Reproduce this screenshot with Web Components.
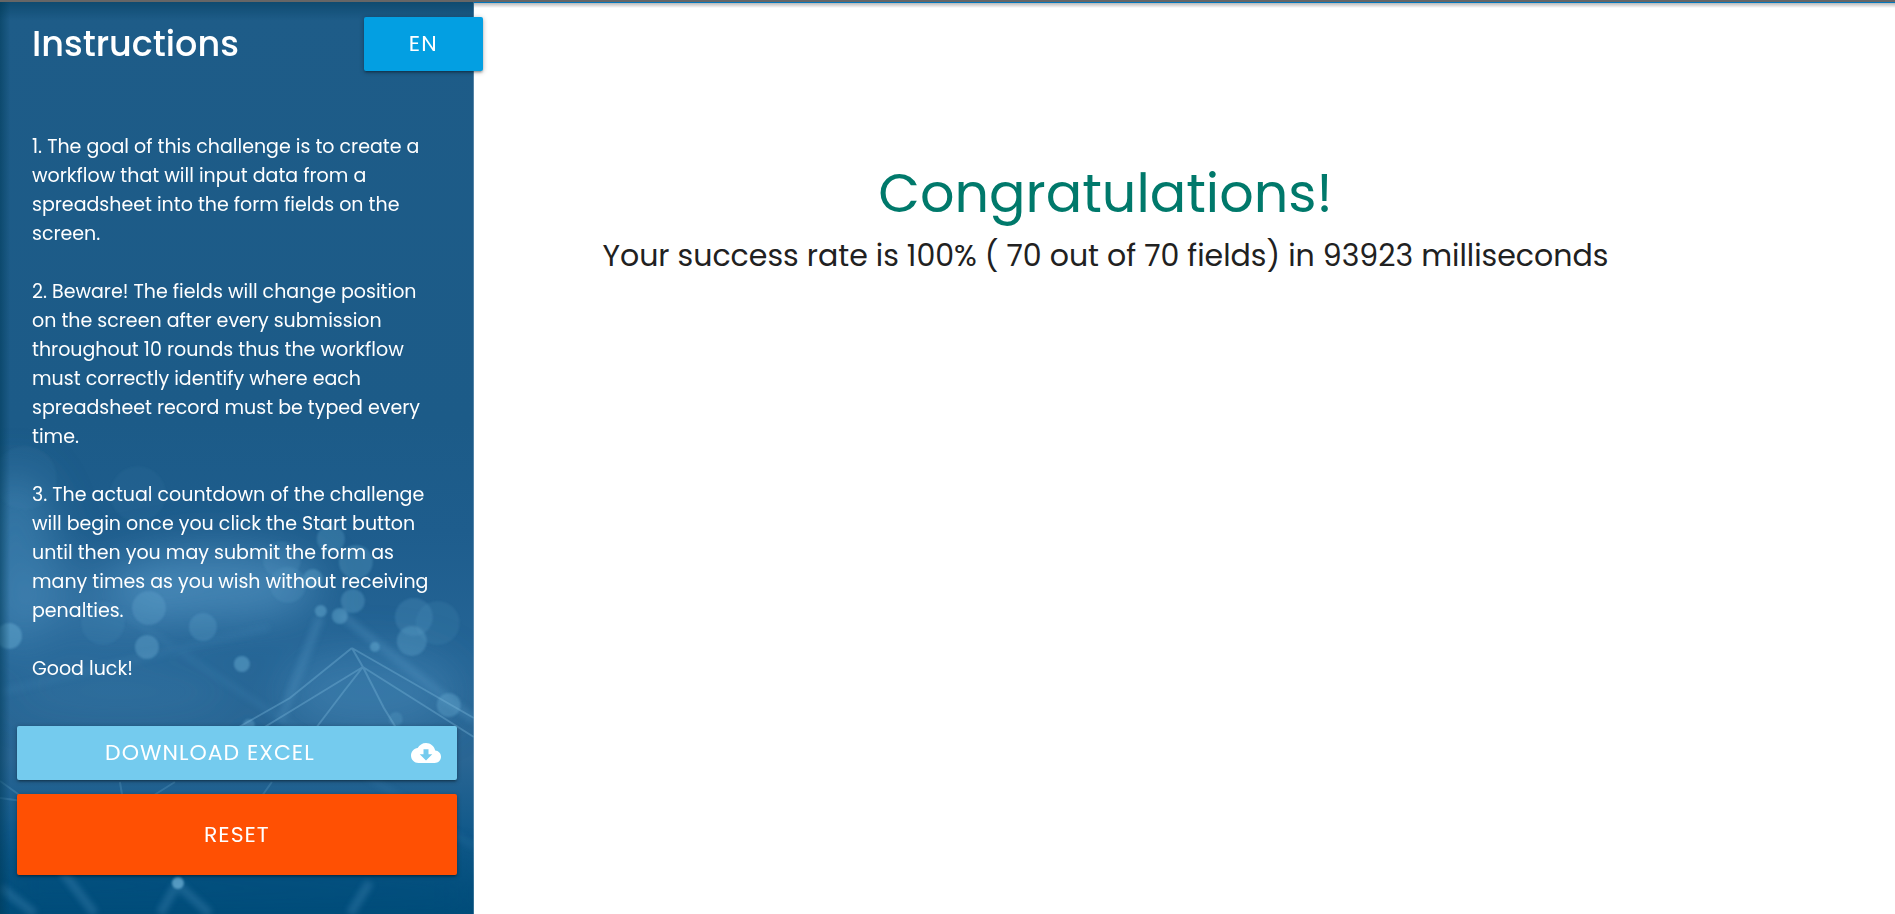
<!DOCTYPE html>
<html lang="en">
<head>
<meta charset="utf-8">
<meta name="viewport" content="width=device-width, initial-scale=1">
<title>Challenge</title>
<style>
html,body{margin:0;height:100%}
body{font-family:Poppins,Inter,"Open Sans",sans-serif;color:#212121;background:#fff}
</style>
</head>
<body>
<rpa-app></rpa-app>
<script>
const define = (name, html) => customElements.define(name, class extends HTMLElement {
  constructor() {
    super();
    const t = document.createElement('template');
    t.innerHTML = html;
    this.attachShadow({mode: 'open'}).append(t.content.cloneNode(true));
  }
});

const buttonBase = `
  :host{display:block}
  button,a{box-sizing:border-box;display:flex;align-items:center;justify-content:center;width:100%;
    border:0;border-radius:2px;color:#fff;font-family:inherit;font-size:22px;line-height:28px;font-weight:400;
    letter-spacing:1px;text-decoration:none;text-transform:uppercase;cursor:pointer;
    box-shadow:0 2px 2px rgba(0,0,0,.14),0 3px 1px -2px rgba(0,0,0,.12),0 1px 5px rgba(0,0,0,.3)}`;

define('lang-button', `<style>${buttonBase}
  :host{width:119px}
  button{height:54px;background:#039fe2}
</style><button type="button"><slot></slot></button>`);

define('reset-button', `<style>${buttonBase}
  button{height:81px;background:#ff5003}
</style><button type="button"><slot></slot></button>`);

define('download-link', `<style>${buttonBase}
  a{height:54px;background:#74cbee;padding:0 16px}
  span{flex:1;text-align:center;white-space:nowrap}
  svg{width:30px;height:30px;margin-left:24px;fill:#fff}
</style><a href="#download"><span><slot></slot></span>
<svg viewBox="0 0 24 24" aria-hidden="true"><path d="M19.35 10.04C18.67 6.59 15.64 4 12 4 9.11 4 6.6 5.64 5.35 8.04 2.34 8.36 0 10.91 0 14c0 3.31 2.69 6 6 6h13c2.76 0 5-2.24 5-5 0-2.64-2.05-4.78-4.65-4.96zM17 13l-5 5-5-5h3V9h4v4h3z"/></svg></a>`);

define('network-backdrop', `<style>
  :host{display:block}
  svg{display:block;width:100%;height:100%}
</style>
<svg viewBox="0 0 474 912" preserveAspectRatio="none" aria-hidden="true">
<defs>
<linearGradient id="base" x1="0" y1="0" x2="0" y2="1">
<stop offset="0" stop-color="#1e5c88"/><stop offset=".46" stop-color="#1c5b88"/><stop offset=".58" stop-color="#1e5d8d"/>
<stop offset=".72" stop-color="#256596"/><stop offset=".83" stop-color="#2a6694"/><stop offset=".91" stop-color="#11598a"/><stop offset="1" stop-color="#004c79"/>
</linearGradient>
<linearGradient id="edge"><stop offset="0" stop-color="#003b58" stop-opacity=".55"/><stop offset="1" stop-color="#003b58" stop-opacity="0"/></linearGradient>
<linearGradient id="top" x1="0" y1="0" x2="0" y2="1"><stop offset="0" stop-color="#003b58" stop-opacity=".5"/><stop offset="1" stop-color="#003b58" stop-opacity="0"/></linearGradient>
<filter id="soft" x="-50%" y="-50%" width="200%" height="200%"><feGaussianBlur stdDeviation="22"/></filter>
<filter id="fuzz" x="-20%" y="-20%" width="140%" height="140%"><feGaussianBlur stdDeviation="1"/></filter>
<filter id="ray" x="-20%" y="-20%" width="140%" height="140%"><feGaussianBlur stdDeviation="3"/></filter>
</defs>
<rect width="474" height="912" fill="url(#base)"/>
<g filter="url(#soft)" fill="#5a9dca">
<ellipse cx="15" cy="560" rx="42" ry="90" opacity=".4"/>
<ellipse cx="215" cy="584" rx="105" ry="36" opacity=".6"/>
<ellipse cx="100" cy="600" rx="90" ry="40" opacity=".25"/>
<ellipse cx="370" cy="690" rx="90" ry="40" opacity=".35"/>
<ellipse cx="120" cy="690" rx="120" ry="26" opacity=".16"/>
</g>
<path d="M0 850L474 872V912H0Z" fill="#004d7c" opacity=".65" filter="url(#soft)"/>
<g filter="url(#ray)" fill="none" stroke="#5b9dca" opacity=".28">
<path d="M340 612L474 718M320 615L280 720" stroke-width="9"/>
<path d="M474 845L120 610M0 690L270 625" stroke-width="8" opacity=".4"/>
<path d="M0 885L35 912M55 860L95 912M177 882L160 912M177 882L210 912M370 880L350 912" stroke-width="9"/>
</g>
<g filter="url(#fuzz)" fill="#68acd2" opacity=".82">
<circle cx="25" cy="476" r="32" opacity=".08"/><circle cx="138" cy="492" r="28" opacity=".08"/>
<circle cx="331" cy="537" r="14" opacity=".35"/><circle cx="282" cy="558" r="19" opacity=".2"/>
<circle cx="356" cy="560" r="17" opacity=".35"/><circle cx="313" cy="577" r="10" opacity=".45"/>
<circle cx="288" cy="583" r="18" opacity=".2"/><circle cx="353" cy="599" r="12" opacity=".4"/>
<circle cx="149" cy="606" r="17" opacity=".38"/><circle cx="203" cy="625" r="14" opacity=".32"/>
<circle cx="103" cy="621" r="22" opacity=".13"/><circle cx="147" cy="645" r="12" opacity=".5"/>
<circle cx="9" cy="634" r="13" opacity=".6"/><circle cx="242" cy="662" r="8" opacity=".6"/>
<circle cx="321" cy="609" r="6" opacity=".6"/><circle cx="340" cy="614" r="8" opacity=".55"/>
<circle cx="414" cy="615" r="19" opacity=".25"/><circle cx="438" cy="621" r="22" opacity=".15"/>
<circle cx="412" cy="639" r="15" opacity=".4"/><circle cx="375" cy="645" r="5" opacity=".6"/>
<circle cx="449" cy="703" r="12" opacity=".45"/><circle cx="396" cy="717" r="7" opacity=".3"/>
<circle cx="249" cy="723" r="6" opacity=".5"/><circle cx="178" cy="881" r="6" opacity=".95"/>
</g>
<g fill="none" stroke="#7ab7db" stroke-width="2" opacity=".38">
<path d="M352 646L363 665L250 734M352 646L290 696L225 733M352 646L474 716M363 665L474 735M363 665L384 706L410 748M363 665L345 688L310 734"/>
<path d="M0 779L32 802M0 796L30 800M175 780L140 802M120 780L124 804M272 780L255 804" opacity=".6"/>
</g>
<rect width="10" height="912" fill="url(#edge)"/><rect width="474" height="18" fill="url(#top)"/>
</svg>`);

define('instructions-panel', `<style>
  :host{display:block;position:relative;z-index:1;color:#fff}
  network-backdrop{position:absolute;inset:0;z-index:-1}
  header{display:flex;justify-content:space-between;align-items:center;padding:15px 0 0 32px;margin-right:-9px}
  h1{margin:0;font-size:35px;line-height:54px;font-weight:500}
  .text{padding:61px 16px 0 32px;font-size:19px;line-height:29px}
  p{margin:0 0 29px}
  .actions{display:grid;gap:14px;padding:14px 17px 34px}
</style>
<network-backdrop></network-backdrop>
<header><h1>Instructions</h1><lang-button>EN</lang-button></header>
<div class="text">
<p>1. The goal of this challenge is to create a<br>workflow that will input data from a<br>spreadsheet into the form fields on the<br>screen.</p>
<p>2. Beware! The fields will change position<br>on the screen after every submission<br>throughout 10 rounds thus the workflow<br>must correctly identify where each<br>spreadsheet record must be typed every<br>time.</p>
<p>3. The actual countdown of the challenge<br>will begin once you click the Start button<br>until then you may submit the form as<br>many times as you wish without receiving<br>penalties.</p>
<p>Good luck!</p>
</div>
<div class="actions"><download-link>Download Excel</download-link><reset-button>Reset</reset-button></div>`);

define('result-message', `<style>
  :host{display:grid;grid-template-columns:8fr 1fr;align-content:start;border-top:1px solid #0277bd;
    background:linear-gradient(rgba(0,0,0,.28),rgba(0,0,0,0)) top/100% 5px no-repeat}
  div{padding-top:158px;text-align:center}
  h2{margin:0;font-size:54px;line-height:64px;font-weight:400;color:#00796b}
  p{margin:11px 0 0;font-size:30px;line-height:40px}
</style><div><h2><slot name="title"></slot></h2><p><slot></slot></p></div>`);

define('rpa-app', `<style>
  :host{box-sizing:border-box;display:grid;grid-template-columns:1fr 3fr;min-height:100%;border-top:2px solid #666}
</style>
<instructions-panel></instructions-panel>
<result-message><span slot="title">Congratulations!</span>Your success rate is 100% ( 70 out of 70 fields) in 93923 milliseconds</result-message>`);
</script>
</body>
</html>
